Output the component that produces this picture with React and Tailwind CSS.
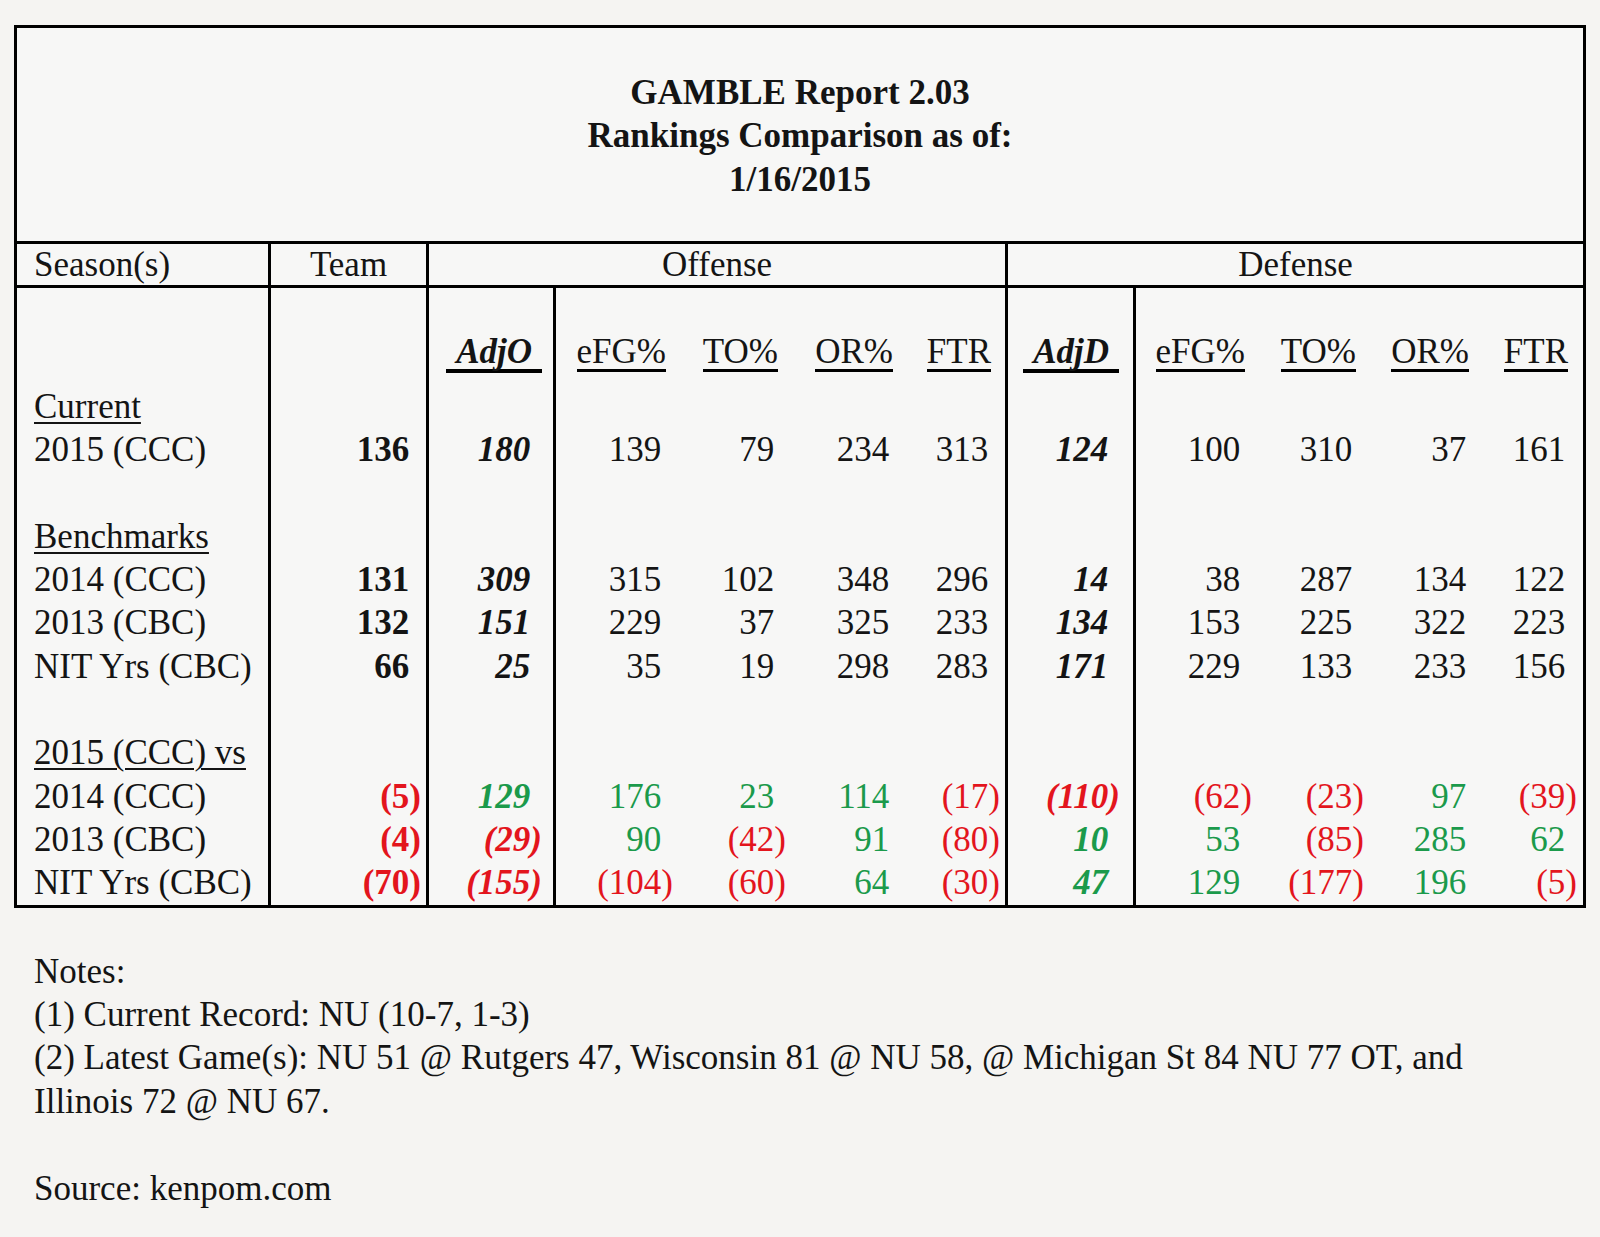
import React from "react";

const grid =
  "grid grid-cols-[254px_158px_127px_120px_112px_115px_105px_128px_119px_112px_113px_103px]";

// per-column classes for the number cells (team .. defense FTR)
const cellCls = [
  "border-r-[3px] border-black pr-[5px] font-bold",
  "border-r-[3px] border-black pr-[11px] font-bold italic",
  "pr-[3px]",
  "pr-[2px]",
  "pr-[2px]",
  "border-r-[3px] border-black pr-[5px]",
  "border-r-[3px] border-black pr-[13px] font-bold italic",
  "pr-[3px]",
  "pr-[3px]",
  "pr-[2px]",
  "pr-[6px]",
];

const heads = [
  { t: "AdjO", cell: "border-r-[3px] border-black pr-[11px] pb-[12px]", span: "px-[10px] border-b-4 font-bold italic" },
  { t: "eFG%", cell: "pr-[10px] pb-[13px]", span: "border-b-[3px]" },
  { t: "TO%", cell: "pr-[10px] pb-[13px]", span: "border-b-[3px]" },
  { t: "OR%", cell: "pr-[10px] pb-[13px]", span: "border-b-[3px]" },
  { t: "FTR", cell: "border-r-[3px] border-black pr-[14px] pb-[13px]", span: "border-b-[3px]" },
  { t: "AdjD", cell: "border-r-[3px] border-black pr-[14px] pb-[12px]", span: "px-[10px] border-b-4 font-bold italic" },
  { t: "eFG%", cell: "pr-[10px] pb-[13px]", span: "border-b-[3px]" },
  { t: "TO%", cell: "pr-[11px] pb-[13px]", span: "border-b-[3px]" },
  { t: "OR%", cell: "pr-[11px] pb-[13px]", span: "border-b-[3px]" },
  { t: "FTR", cell: "pr-[15px] pb-[13px]", span: "border-b-[3px]" },
];

const rows = [
  { label: "Current", u: true },
  { label: "2015 (CCC)", v: ["136", "180", "139", "79", "234", "313", "124", "100", "310", "37", "161"] },
  { label: "" },
  { label: "Benchmarks", u: true },
  { label: "2014 (CCC)", v: ["131", "309", "315", "102", "348", "296", "14", "38", "287", "134", "122"] },
  { label: "2013 (CBC)", v: ["132", "151", "229", "37", "325", "233", "134", "153", "225", "322", "223"] },
  { label: "NIT Yrs (CBC)", v: ["66", "25", "35", "19", "298", "283", "171", "229", "133", "233", "156"] },
  { label: "" },
  { label: "2015 (CCC) vs", u: true },
  { label: "2014 (CCC)", v: ["(5)", "129", "176", "23", "114", "(17)", "(110)", "(62)", "(23)", "97", "(39)"], c: true },
  { label: "2013 (CBC)", v: ["(4)", "(29)", "90", "(42)", "91", "(80)", "10", "53", "(85)", "285", "62"], c: true },
  { label: "NIT Yrs (CBC)", v: ["(70)", "(155)", "(104)", "(60)", "64", "(30)", "47", "129", "(177)", "196", "(5)"], c: true },
];

function Num({ value, colored }) {
  const neg = value.startsWith("(");
  let color = "";
  if (colored) color = neg ? "text-[#e3151d]" : "text-[#1b9a4b]";
  return (
    <span className={color}>
      {value}
      {!neg && <span className="invisible">)</span>}
    </span>
  );
}

export default function App() {
  return (
    <div className="min-h-screen bg-[#f5f4f2] font-['Liberation_Serif','Times_New_Roman',serif] text-[35px] text-[#141414]">
      <div className="pt-[25px] pl-[14px]">
        <div className="w-[1572px] border-[3px] border-black bg-[#f7f7f6]">
          {/* title */}
          <div className="h-[216px] pt-[3px] flex flex-col items-center justify-center border-b-[3px] border-black font-bold leading-[43.4px]">
            <div>GAMBLE Report 2.03</div>
            <div>Rankings Comparison as of:</div>
            <div>1/16/2015</div>
          </div>

          {/* group header */}
          <div className={`${grid} h-[44px] leading-[41px] border-b-[3px] border-black`}>
            <div className="border-r-[3px] border-black pl-[17px]">Season(s)</div>
            <div className="border-r-[3px] border-black text-center">Team</div>
            <div className="col-span-5 border-r-[3px] border-black text-center">Offense</div>
            <div className="col-span-5 text-center">Defense</div>
          </div>

          {/* column headers */}
          <div className={`${grid} h-[97px]`}>
            <div className="border-r-[3px] border-black" />
            <div className="border-r-[3px] border-black" />
            {heads.map((h, i) => (
              <div key={i} className={`flex items-end justify-end ${h.cell}`}>
                <span className={`inline-block leading-none border-black ${h.span}`}>{h.t}</span>
              </div>
            ))}
          </div>

          {/* data rows */}
          {rows.map((r, i) => (
            <div key={i} className={`${grid} h-[43.3px] leading-[43.3px]`}>
              <div className="border-r-[3px] border-black pl-[17px] whitespace-nowrap">
                {r.u ? (
                  <span className="underline decoration-2 underline-offset-[4px]">{r.label}</span>
                ) : (
                  r.label
                )}
              </div>
              {cellCls.map((cls, j) => (
                <div key={j} className={`text-right whitespace-nowrap ${cls}`}>
                  {r.v && <Num value={r.v[j]} colored={r.c} />}
                </div>
              ))}
            </div>
          ))}
        </div>
      </div>

      {/* notes */}
      <div className="mt-[42px] pl-[34px] leading-[43.4px]">
        <div>Notes:</div>
        <div>(1) Current Record: NU (10-7, 1-3)</div>
        <div>
          (2) Latest Game(s): NU 51 @ Rutgers 47, Wisconsin 81 @ NU 58, @ Michigan St 84 NU 77 OT, and
          <br />
          Illinois 72 @ NU 67.
        </div>
        <div className="h-[43.4px]" />
        <div>Source: kenpom.com</div>
      </div>
    </div>
  );
}
